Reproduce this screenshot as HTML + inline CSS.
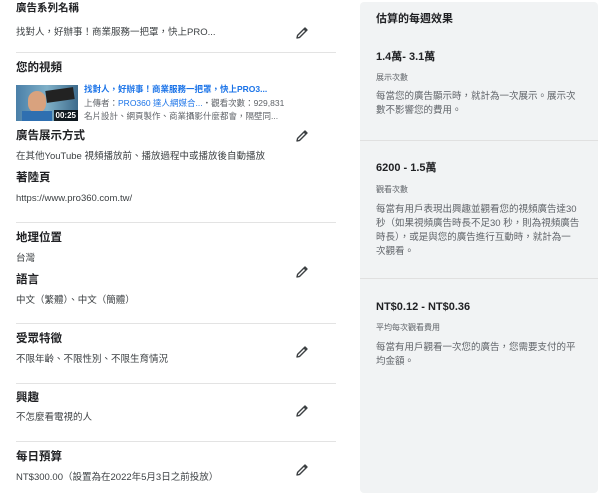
<!DOCTYPE html>
<html><head><meta charset="utf-8"><style>
body{margin:0;width:600px;height:495px;background:#fff;font-family:"Liberation Sans","Noto Sans CJK TC",sans-serif;position:relative;overflow:hidden;color:#3c4043}
.a{position:absolute;white-space:nowrap;line-height:1}
.t{font-size:11.5px;font-weight:bold;color:#202124}
.s{font-size:9.5px;color:#3c4043}
.hr{position:absolute;left:16px;width:320px;height:1px;background:#e3e3e3}
.p{position:absolute;width:14px;height:14px}
.panel{position:absolute;left:360px;top:2px;width:238px;height:491px;background:#f1f3f4;border-radius:4px}
.phr{position:absolute;left:360px;width:238px;height:1px;background:#e0e0e0}
.rt{font-size:11px;font-weight:bold;color:#202124}
.rl{font-size:8px;color:#5f6368}
.rd{font-size:9.5px;color:#5f6368;line-height:14px}
.v{font-size:8.5px}
</style></head><body>
<div class="a t" style="left:16px;top:3px;font-size:10.5px">廣告系列名稱</div>
<div class="a s" style="left:16px;top:28px">找對人，好辦事！商業服務一把罩，快上PRO...</div>
<div class="hr" style="top:52px"></div>
<div class="a t" style="left:16px;top:63px">您的視頻</div>
<div style="position:absolute;left:16px;top:85px;width:62px;height:36px;background:linear-gradient(90deg,#4a7fa8,#7fb0c8 50%,#3d6b8c);overflow:hidden">
<div style="position:absolute;left:12px;top:6px;width:18px;height:22px;border-radius:9px;background:#d9a27e"></div>
<div style="position:absolute;left:6px;top:26px;width:30px;height:12px;background:#2f6fb0"></div>
<div style="position:absolute;left:30px;top:4px;width:28px;height:12px;background:#222;transform:rotate(-8deg)"></div>
<div style="position:absolute;right:0;bottom:0;background:rgba(0,0,0,.8);color:#fff;font-size:8px;font-weight:bold;padding:1px 2px">00:25</div></div>
<div class="a v" style="left:84px;top:85px;color:#1a73e8;font-weight:bold">找對人，好辦事！商業服務一把罩，快上PRO3...</div>
<div class="a v" style="left:84px;top:99px;color:#5f6368">上傳者：<span style="color:#1a73e8">PRO360 達人網媒合...</span>・觀看次數：929,831</div>
<div class="a v" style="left:84px;top:112px;color:#5f6368">名片設計、網頁製作、商業攝影什麼都會，隔壁同...</div>
<div class="a t" style="left:16px;top:131px">廣告展示方式</div>
<div class="a s" style="left:16px;top:152px">在其他YouTube 視頻播放前、播放過程中或播放後自動播放</div>
<div class="a t" style="left:16px;top:173px">著陸頁</div>
<div class="a s" style="left:16px;top:194px">https://www.pro360.com.tw/</div>
<div class="hr" style="top:222px"></div>
<div class="a t" style="left:16px;top:233px">地理位置</div>
<div class="a s" style="left:16px;top:254px">台灣</div>
<div class="a t" style="left:16px;top:275px">語言</div>
<div class="a s" style="left:16px;top:296px">中文（繁體）、中文（簡體）</div>
<div class="hr" style="top:323px"></div>
<div class="a t" style="left:16px;top:334px">受眾特徵</div>
<div class="a s" style="left:16px;top:355px">不限年齡、不限性別、不限生育情況</div>
<div class="hr" style="top:383px"></div>
<div class="a t" style="left:16px;top:393px">興趣</div>
<div class="a s" style="left:16px;top:413px">不怎麼看電視的人</div>
<div class="hr" style="top:441px"></div>
<div class="a t" style="left:16px;top:452px">每日預算</div>
<div class="a s" style="left:16px;top:473px">NT$300.00（設置為在2022年5月3日之前投放）</div>

<svg class="p" style="left:295px;top:26px" viewBox="0 0 14 14"><path d="M2 12 L2.6 9.4 L10 2 L12 4 L4.6 11.4 Z M9 3 L11 5" fill="none" stroke="#3c4043" stroke-width="1.4" stroke-linejoin="round"/></svg>
<svg class="p" style="left:295px;top:129px" viewBox="0 0 14 14"><path d="M2 12 L2.6 9.4 L10 2 L12 4 L4.6 11.4 Z M9 3 L11 5" fill="none" stroke="#3c4043" stroke-width="1.4" stroke-linejoin="round"/></svg>
<svg class="p" style="left:295px;top:265px" viewBox="0 0 14 14"><path d="M2 12 L2.6 9.4 L10 2 L12 4 L4.6 11.4 Z M9 3 L11 5" fill="none" stroke="#3c4043" stroke-width="1.4" stroke-linejoin="round"/></svg>
<svg class="p" style="left:295px;top:345px" viewBox="0 0 14 14"><path d="M2 12 L2.6 9.4 L10 2 L12 4 L4.6 11.4 Z M9 3 L11 5" fill="none" stroke="#3c4043" stroke-width="1.4" stroke-linejoin="round"/></svg>
<svg class="p" style="left:295px;top:404px" viewBox="0 0 14 14"><path d="M2 12 L2.6 9.4 L10 2 L12 4 L4.6 11.4 Z M9 3 L11 5" fill="none" stroke="#3c4043" stroke-width="1.4" stroke-linejoin="round"/></svg>
<svg class="p" style="left:295px;top:463px" viewBox="0 0 14 14"><path d="M2 12 L2.6 9.4 L10 2 L12 4 L4.6 11.4 Z M9 3 L11 5" fill="none" stroke="#3c4043" stroke-width="1.4" stroke-linejoin="round"/></svg>

<div class="panel"></div>
<div class="phr" style="top:140px"></div>
<div class="phr" style="top:278px"></div>
<div class="a rt" style="left:376px;top:14px">估算的每週效果</div>
<div class="a rt" style="left:376px;top:52px">1.4萬- 3.1萬</div>
<div class="a rl" style="left:376px;top:74px">展示次數</div>
<div class="a rd" style="left:376px;top:90px">每當您的廣告顯示時，就計為一次展示。展示次<br>數不影響您的費用。</div>
<div class="a rt" style="left:376px;top:163px">6200 - 1.5萬</div>
<div class="a rl" style="left:376px;top:186px">觀看次數</div>
<div class="a rd" style="left:376px;top:203px">每當有用戶表現出興趣並觀看您的視頻廣告達30<br>秒（如果視頻廣告時長不足30 秒，則為視頻廣告<br>時長），或是與您的廣告進行互動時，就計為一<br>次觀看。</div>
<div class="a rt" style="left:376px;top:302px">NT$0.12 - NT$0.36</div>
<div class="a rl" style="left:376px;top:324px">平均每次觀看費用</div>
<div class="a rd" style="left:376px;top:341px">每當有用戶觀看一次您的廣告，您需要支付的平<br>均金額。</div>
</body></html>
